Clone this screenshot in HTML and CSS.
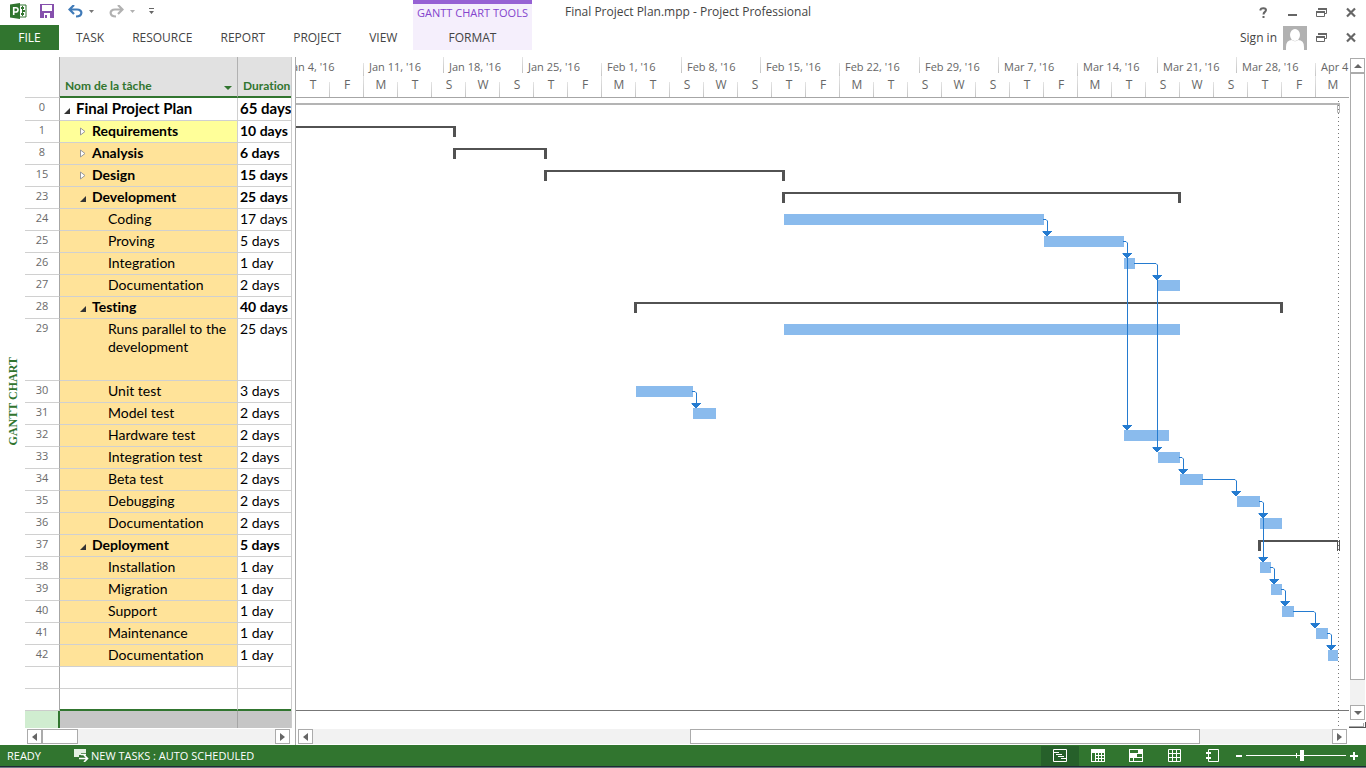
FILE: index.html
```html
<!DOCTYPE html>
<html lang="en">
<head>
<meta charset="utf-8">
<title>Final Project Plan.mpp - Project Professional</title>
<link rel="stylesheet" href="styles.css">
</head>
<body>
<header class="ribbon">
  <div class="quick">
    <svg class="app-logo" width="17" height="16" viewBox="0 0 17 16" aria-hidden="true"><path d="M9 2h7v12H9z" fill="#fff" stroke="#31752f"/><path d="M11 5h3M12 8h3M11 11h3" stroke="#31752f" stroke-width="2"/><path d="M12.500 3v10" stroke="#31752f"/><path d="M0 1.500 10 0v16L0 14.500z" fill="#31752f"/><path d="M3.700 12V4.700h2.200a1.900 1.900 0 0 1 0 4.300H3.700" fill="none" stroke="#fff" stroke-width="1.600"/></svg>
    <button class="tool" aria-label="Save"><svg width="14" height="14" viewBox="0 0 14 14"><path d="M0 0h14v14H0z" fill="#8650ad"/><path d="M2 1h10v6H2zM4 9h6v5H7v-3H5v3H4z" fill="#fff"/></svg></button>
    <button class="tool" aria-label="Undo"><svg width="15" height="13" viewBox="0 0 15 13"><path d="M6 0 1.500 4.500 6 9M2 4.500h7c6 0 6 7-1 7" fill="none" stroke="#3f7ab8" stroke-width="2.200"/></svg></button>
    <button class="drop" aria-label="Undo list"><svg width="5" height="3" viewBox="0 0 5 3"><path d="M0 0h5L2.500 3z" fill="#777"/></svg></button>
    <button class="tool redo" aria-label="Redo"><svg width="15" height="13" viewBox="0 0 15 13"><path d="M9 0l4.500 4.500L9 9M13 4.500H6c-6 0-6 7 1 7" fill="none" stroke="#b1b1b1" stroke-width="2.200"/></svg></button>
    <button class="drop" aria-label="Redo list"><svg width="5" height="3" viewBox="0 0 5 3"><path d="M0 0h5L2.500 3z" fill="#b1b1b1"/></svg></button>
    <button class="drop more" aria-label="Customize toolbar"><svg width="5" height="6" viewBox="0 0 5 6"><path d="M0 0h5v1H0zM0 3h5L2.500 6z" fill="#666"/></svg></button>
  </div>
  <nav class="tabs">
    <button class="tab file">FILE</button>
    <button class="tab">TASK</button>
    <button class="tab">RESOURCE</button>
    <button class="tab">REPORT</button>
    <button class="tab">PROJECT</button>
    <button class="tab">VIEW</button>
  </nav>
  <div class="context">
    <span class="context-name">GANTT CHART TOOLS</span>
    <button class="tab">FORMAT</button>
  </div>
  <div class="caption">
    <h1 class="title">Final Project Plan.mpp - Project Professional</h1>
    <div class="win">
      <button class="win-btn" aria-label="Help"><svg width="9" height="11" viewBox="0 0 9 11"><path d="M1.500 3.500V2.500C2 .6 7 .6 7 3c0 2-2.500 1.800-2.500 4.500M4.500 9v2" fill="none" stroke="#666" stroke-width="2"/></svg></button>
      <button class="win-btn" aria-label="Minimize"><svg width="9" height="11" viewBox="0 0 9 11"><path d="M0 7h9v2H0z" fill="#666"/></svg></button>
      <button class="win-btn" aria-label="Restore"><svg width="11" height="11" viewBox="0 0 11 11"><path d="M2.500 3V1.500h8v5H9M.5 4.500h8v5h-8zM2 1.500h9M0 4.500h9" fill="none" stroke="#666"/><path d="M2 1h9v2H2zM0 4h9v2H0z" fill="#666"/></svg></button>
      <button class="win-btn" aria-label="Close"><svg width="10" height="11" viewBox="0 0 10 11"><path d="M1 1.500l8 8M9 1.500l-8 8" stroke="#666" stroke-width="2.200"/></svg></button>
    </div>
  </div>
  <div class="account">
    <a class="signin" href="#">Sign in</a>
    <svg class="avatar" width="24" height="24" viewBox="0 0 24 24" aria-hidden="true"><path d="M0 0h24v24H0z" fill="#b1b1b1"/><ellipse cx="12" cy="9" rx="5" ry="6" fill="#fff"/><path d="M3 24v-3q0-7 6-7 3 2.500 6 0 6 0 6 7v3z" fill="#fff"/></svg>
    <button class="win-btn" aria-label="Restore document"><svg width="11" height="11" viewBox="0 0 11 11"><path d="M2.500 3V1.500h8v5H9M.5 4.500h8v5h-8z" fill="none" stroke="#666"/><path d="M2 1h9v2H2zM0 4h9v2H0z" fill="#666"/></svg></button>
    <button class="win-btn" aria-label="Close document"><svg width="10" height="11" viewBox="0 0 10 11"><path d="M1 1.500l8 8M9 1.500l-8 8" stroke="#666" stroke-width="2.200"/></svg></button>
  </div>
</header>

<main class="work">
  <aside class="rail"><span class="rail-name">GANTT CHART</span></aside>

  <section class="sheet">
    <div class="sheet-body">
      <table class="tasks">
        <colgroup><col class="c-id"><col class="c-name"><col class="c-dur"></colgroup>
        <thead><tr><th class="id" aria-label="ID"></th><th class="name"><div class="head">Nom de la tâche <svg width="8" height="4" viewBox="0 0 8 4"><path d="M0 0h8L4 4z" fill="#31752f"/></svg></div></th><th class="dur">Duration</th></tr></thead>
        <tbody>
          <tr class="root"><td class="id">0</td><td class="name l0"><button class="exp open" aria-label="Collapse"><svg width="6" height="6" viewBox="0 0 6 6"><path d="M6 0v6H0z" fill="#333"/></svg></button>Final Project Plan</td><td class="dur">65 days</td></tr>
          <tr class="sum current"><td class="id">1</td><td class="name l1"><button class="exp" aria-label="Expand"><svg width="6" height="9" viewBox="0 0 6 9"><path d="M.5 1v7L5 4.500z" fill="#fff" stroke="#999"/></svg></button>Requirements</td><td class="dur">10 days</td></tr>
          <tr class="sum"><td class="id">8</td><td class="name l1"><button class="exp" aria-label="Expand"><svg width="6" height="9" viewBox="0 0 6 9"><path d="M.5 1v7L5 4.500z" fill="#fff" stroke="#999"/></svg></button>Analysis</td><td class="dur">6 days</td></tr>
          <tr class="sum"><td class="id">15</td><td class="name l1"><button class="exp" aria-label="Expand"><svg width="6" height="9" viewBox="0 0 6 9"><path d="M.5 1v7L5 4.500z" fill="#fff" stroke="#999"/></svg></button>Design</td><td class="dur">15 days</td></tr>
          <tr class="sum"><td class="id">23</td><td class="name l1"><button class="exp open" aria-label="Collapse"><svg width="6" height="6" viewBox="0 0 6 6"><path d="M6 0v6H0z" fill="#333"/></svg></button>Development</td><td class="dur">25 days</td></tr>
          <tr><td class="id">24</td><td class="name l2">Coding</td><td class="dur">17 days</td></tr>
          <tr><td class="id">25</td><td class="name l2">Proving</td><td class="dur">5 days</td></tr>
          <tr><td class="id">26</td><td class="name l2">Integration</td><td class="dur">1 day</td></tr>
          <tr><td class="id">27</td><td class="name l2">Documentation</td><td class="dur">2 days</td></tr>
          <tr class="sum"><td class="id">28</td><td class="name l1"><button class="exp open" aria-label="Collapse"><svg width="6" height="6" viewBox="0 0 6 6"><path d="M6 0v6H0z" fill="#333"/></svg></button>Testing</td><td class="dur">40 days</td></tr>
          <tr class="tall"><td class="id">29</td><td class="name l2">Runs parallel to the development</td><td class="dur">25 days</td></tr>
          <tr><td class="id">30</td><td class="name l2">Unit test</td><td class="dur">3 days</td></tr>
          <tr><td class="id">31</td><td class="name l2">Model test</td><td class="dur">2 days</td></tr>
          <tr><td class="id">32</td><td class="name l2">Hardware test</td><td class="dur">2 days</td></tr>
          <tr><td class="id">33</td><td class="name l2">Integration test</td><td class="dur">2 days</td></tr>
          <tr><td class="id">34</td><td class="name l2">Beta test</td><td class="dur">2 days</td></tr>
          <tr><td class="id">35</td><td class="name l2">Debugging</td><td class="dur">2 days</td></tr>
          <tr><td class="id">36</td><td class="name l2">Documentation</td><td class="dur">2 days</td></tr>
          <tr class="sum"><td class="id">37</td><td class="name l1"><button class="exp open" aria-label="Collapse"><svg width="6" height="6" viewBox="0 0 6 6"><path d="M6 0v6H0z" fill="#333"/></svg></button>Deployment</td><td class="dur">5 days</td></tr>
          <tr><td class="id">38</td><td class="name l2">Installation</td><td class="dur">1 day</td></tr>
          <tr><td class="id">39</td><td class="name l2">Migration</td><td class="dur">1 day</td></tr>
          <tr><td class="id">40</td><td class="name l2">Support</td><td class="dur">1 day</td></tr>
          <tr><td class="id">41</td><td class="name l2">Maintenance</td><td class="dur">1 day</td></tr>
          <tr><td class="id">42</td><td class="name l2">Documentation</td><td class="dur">1 day</td></tr>
          <tr class="blank"><td class="id"></td><td class="name"></td><td class="dur"></td></tr>
          <tr class="blank before"><td class="id"></td><td class="name"></td><td class="dur"></td></tr>
          <tr class="picked"><td class="id"></td><td class="name"></td><td class="dur"></td></tr>
        </tbody>
      </table>
    </div>
    <div class="hbar">
      <button class="arrow" aria-label="Scroll left"><svg width="5" height="8" viewBox="0 0 5 8"><path d="M5 0v8L0 4z" fill="#666"/></svg></button>
      <div class="track"><div class="thumb sheet-thumb"></div></div>
      <button class="arrow" aria-label="Scroll right"><svg width="5" height="8" viewBox="0 0 5 8"><path d="M0 0v8l5-4z" fill="#666"/></svg></button>
    </div>
  </section>

  <section class="gantt">
    <div class="view">
      <div class="scale">
        <div class="weeks">
          <span class="week major">Jan 4, '16</span><span class="week">Jan 11, '16</span><span class="week">Jan 18, '16</span><span class="week major">Jan 25, '16</span><span class="week">Feb 1, '16</span><span class="week">Feb 8, '16</span><span class="week major">Feb 15, '16</span><span class="week">Feb 22, '16</span><span class="week">Feb 29, '16</span><span class="week major">Mar 7, '16</span><span class="week">Mar 14, '16</span><span class="week">Mar 21, '16</span><span class="week major">Mar 28, '16</span><span class="week last">Apr 4</span>
        </div>
        <div class="days">
          <span class="day">T</span><span class="day major">F</span><span class="day">M</span><span class="day">T</span><span class="day">S</span><span class="day">W</span><span class="day">S</span><span class="day">T</span><span class="day major">F</span><span class="day">M</span><span class="day">T</span><span class="day">S</span><span class="day">W</span><span class="day">S</span><span class="day">T</span><span class="day major">F</span><span class="day">M</span><span class="day">T</span><span class="day">S</span><span class="day">W</span><span class="day">S</span><span class="day">T</span><span class="day major">F</span><span class="day">M</span><span class="day">T</span><span class="day">S</span><span class="day">W</span><span class="day">S</span><span class="day">T</span><span class="day major">F</span><span class="day last">M</span>
        </div>
      </div>
      <div class="canvas">
        <svg class="chart" width="1053" height="630" viewBox="296 98 1053 630" role="img" aria-label="Gantt bars">
          <defs><path id="tip" d="M-4.500-5h9v1h-1v1h-1v1h-1v1h-1v1h-2v-1h-1v-1h-1v-1h-1v-1h-1z"/></defs>
          <path d="M296 710.500h1053" stroke="#777"/>
          <path d="M296 104h1043" stroke="#b4b4b4" stroke-width="2"/>
          <path d="M1337.500 105v7.500h2V103" fill="none" stroke="#b4b4b4"/>
          <g fill="#525252">
            <path d="M296 126h160v11h-3v-9H296z"/>
            <path d="M453 148h94v11h-3v-9h-88v9h-3z"/>
            <path d="M544 170h241v11h-3v-9H547v9h-3z"/>
            <path d="M782 192h399v11h-3v-9H785v9h-3z"/>
            <path d="M634 302h649v11h-3v-9H637v9h-3z"/>
            <path d="M1258 540h80v2h-77v9h-3zM1337 540h1v11h-1zM1339 540h1v11h-1z"/>
          </g>
          <g fill="#8abbed">
            <path d="M784 214h260v11H784z"/><path d="M1044 236h80v11h-80z"/><path d="M1124 258h11v11h-11z"/><path d="M1158 280h22v11h-22z"/>
            <path d="M784 324h396v11H784z"/><path d="M636 386h57v11h-57z"/><path d="M693 408h23v11h-23z"/><path d="M1124 430h45v11h-45z"/>
            <path d="M1158 452h22v11h-22z"/><path d="M1180 474h23v11h-23z"/><path d="M1237 496h23v11h-23z"/><path d="M1260 518h22v11h-22z"/>
            <path d="M1260 562h11v11h-11z"/><path d="M1271 584h11v11h-11z"/><path d="M1282 606h12v11h-12z"/><path d="M1316 628h12v11h-12z"/><path d="M1328 650h10v11h-10z"/>
          </g>
          <g fill="none" stroke="#247bd0">
            <path d="M1043 219.500h3l1.500 1.500v11"/><path d="M1123 241.500h3l1.500 1.500v183"/><path d="M1134 263.500h22l1.500 1.500v183"/>
            <path d="M692 391.500h3l1.500 1.500v11"/><path d="M1179 457.500h3l1.500 1.500v11"/><path d="M1202 479.500h33l1.500 1.500v11"/>
            <path d="M1259 501.500h3l1.500 1.500v55"/><path d="M1270 567.500h3l1.500 1.500v11"/><path d="M1281 589.500h3l1.500 1.500v11"/>
            <path d="M1293 611.500h21l1.500 1.500v11"/><path d="M1327 633.500h3l1.500 1.500v11"/>
          </g>
          <g fill="#247bd0">
            <use href="#tip" x="1047.500" y="236"/><use href="#tip" x="1127.500" y="258"/><use href="#tip" x="1157.500" y="280"/><use href="#tip" x="696.500" y="408"/><use href="#tip" x="1127.500" y="430"/><use href="#tip" x="1157.500" y="452"/><use href="#tip" x="1183.500" y="474"/><use href="#tip" x="1236.500" y="496"/><use href="#tip" x="1263.500" y="518"/><use href="#tip" x="1263.500" y="562"/><use href="#tip" x="1274.500" y="584"/><use href="#tip" x="1285.500" y="606"/><use href="#tip" x="1315.500" y="628"/><use href="#tip" x="1331.500" y="650"/>
          </g>
          <path d="M1338.500 101v627" stroke="#777" stroke-dasharray="1 3"/>
        </svg>
      </div>
      <div class="hbar">
        <button class="arrow" aria-label="Scroll left"><svg width="5" height="8" viewBox="0 0 5 8"><path d="M5 0v8L0 4z" fill="#666"/></svg></button>
        <div class="track"><div class="thumb gantt-thumb"></div></div>
        <button class="arrow" aria-label="Scroll right"><svg width="5" height="8" viewBox="0 0 5 8"><path d="M0 0v8l5-4z" fill="#666"/></svg></button>
      </div>
    </div>
    <div class="vside">
      <button class="arrow" aria-label="Scroll up"><svg width="8" height="4" viewBox="0 0 8 4"><path d="M0 4h8L4 0z" fill="#666"/></svg></button>
      <div class="vtrack"><div class="vthumb"></div></div>
      <button class="arrow" aria-label="Scroll down"><svg width="8" height="4" viewBox="0 0 8 4"><path d="M0 0h8L4 4z" fill="#666"/></svg></button>
      <svg class="split" width="17" height="6" viewBox="0 0 17 6" aria-hidden="true"><path d="M0 4h14V1h1v4H0z" fill="#aaa"/><path d="M0 5h16V0h1v6H0z" fill="#555"/></svg>
    </div>
  </section>
</main>

<footer class="status">
  <span class="ready">READY</span>
  <button class="mode"><svg width="15" height="13" viewBox="0 0 15 13"><path d="M0 0h12v4H7v2H5v2H0z" fill="#e4f1e3"/><path d="M5 9.500h8M10 6l3.500 3.500L10 13M7 5.500h5" fill="none" stroke="#fff" stroke-width="1.600"/></svg>NEW TASKS : AUTO SCHEDULED</button>
  <div class="views">
    <button class="view-btn on" aria-label="Gantt chart"><svg width="14" height="13" viewBox="0 0 14 13"><path d="M.5.5h13v12H.5zM1 3.500h5M3 5.500h6M5 7.500h6M8 9.500h5" fill="none" stroke="#fff"/></svg></button>
    <button class="view-btn" aria-label="Task usage"><svg width="14" height="13" viewBox="0 0 14 13"><path d="M0 0h14v13H0z" fill="#fff"/><path d="M1 4h3v8H1zM5 4h2v2H5zM8 4h2v2H8zM11 4h2v2h-2zM5 7h2v2H5zM8 7h2v2H8zM11 7h2v2h-2zM5 10h2v2H5zM8 10h2v2H8zM11 10h2v2h-2z" fill="#31752f"/></svg></button>
    <button class="view-btn" aria-label="Team planner"><svg width="14" height="13" viewBox="0 0 14 13"><path d="M0 0h14v13H0z" fill="#fff"/><path d="M1 1h8v3H1zM8 5h5v3H8zM1 9h3v3H1zM5 9h8v3H5z" fill="#31752f"/></svg></button>
    <button class="view-btn" aria-label="Resource sheet"><svg width="13" height="13" viewBox="0 0 13 13"><path d="M.5.5h12v12H.5zM4.500 0v13M8.500 0v13M0 4.500h13M0 8.500h13" fill="none" stroke="#fff"/></svg></button>
    <button class="view-btn" aria-label="Report"><svg width="13" height="13" viewBox="0 0 13 13"><path d="M2.500 3V.5h10v12h-10V10M2.500 5v3" fill="none" stroke="#fff"/><path d="M0 3h5v2H0zM0 8h5v2H0z" fill="#fff"/></svg></button>
  </div>
  <div class="zoom">
    <button class="zoom-btn" aria-label="Zoom out"><svg width="6" height="2" viewBox="0 0 6 2"><path d="M0 0h6v2H0z" fill="#fff"/></svg></button>
    <input class="slider" type="range" min="0" max="100" value="56" aria-label="Zoom">
    <button class="zoom-btn" aria-label="Zoom in"><svg width="8" height="8" viewBox="0 0 8 8"><path d="M3 0h2v3h3v2H5v3H3V5H0V3h3z" fill="#fff"/></svg></button>
  </div>
</footer>
</body>
</html>
```
FILE: styles.css
```css
* { box-sizing: border-box; }
html, body { height: 100%; margin: 0; }
body {
  display: flex;
  flex-direction: column;
  overflow: hidden;
  background: #fff;
  color: #444;
  font: 12px/16px "Open Sans", "Noto Sans", sans-serif;
  border-bottom: 1px solid #6c7780;
}
button {
  margin: 0;
  padding: 0;
  border: 0;
  background: none;
  color: inherit;
  font: inherit;
  display: inline-flex;
  align-items: center;
  justify-content: center;
}
svg { display: block; flex: none; }

/* Ribbon */
.ribbon {
  display: grid;
  grid-template-columns: 413px 119px 1fr;
  grid-template-rows: 25px 25px;
  padding-bottom: 7px;
  flex: none;
  box-sizing: content-box;
}
.quick { display: flex; align-items: center; padding: 0 0 3px 10px; }
.quick .tool { margin-left: 14px; }
.quick .app-logo { margin-right: -1px; }
.quick .drop { margin-left: 6px; }
.quick .redo { margin-left: 15px; }
.quick .more { margin-left: 14px; }
.tabs { grid-row: 2; grid-column: 1; display: flex; }
.tab { padding: 0 14px; height: 25px; }
.file { width: 59px; margin-right: 3px; background: #31752f; color: #fff; }
.context {
  grid-row: 1 / 3;
  grid-column: 2;
  display: flex;
  flex-direction: column;
  align-items: center;
  justify-content: space-between;
  background: #f5effc;
  border-top: 4px solid #9661d4;
}
.context-name { color: #8445cd; font-size: 11px; line-height: 18px; white-space: nowrap; }
.caption { grid-row: 1; grid-column: 3; display: flex; justify-content: space-between; align-items: center; padding: 0 1px 1px 33px; }
.title { margin: 0; font-size: 12px; font-weight: 400; }
.win, .account { display: flex; align-items: center; }
.account { grid-row: 2; grid-column: 3; justify-content: flex-end; padding-right: 1px; }
.win-btn { width: 29px; height: 24px; }
.signin { color: inherit; text-decoration: none; margin-right: 6px; }

/* Work area */
.work { flex: 1; min-height: 0; display: flex; }
.rail { width: 25px; display: flex; align-items: center; justify-content: center; }
.rail-name {
  writing-mode: vertical-rl;
  transform: rotate(180deg);
  white-space: nowrap;
  color: #31752f;
  font: bold 12px/16px "Liberation Serif", serif;
}
.sheet {
  width: 271px;
  flex: none;
  display: flex;
  flex-direction: column;
  padding-right: 3px;
  border-right: 1px solid #aaa;
}
.sheet-body { flex: 1; min-height: 0; overflow: hidden; border-right: 1px solid #ccc; }
.tasks {
  width: 100%;
  table-layout: fixed;
  border-collapse: separate;
  border-spacing: 0;
  color: #000;
  font: 14px/18px Lato, sans-serif;
  font-variant-ligatures: no-common-ligatures;
}
.c-id { width: 35px; }
.c-name { width: 178px; }
.tasks td, .tasks th { padding: 0; height: 22px; border-bottom: 1px solid #d0d0d0; border-right: 1px solid #d0d0d0; vertical-align: top; overflow: hidden; text-align: left; }
.tasks .dur { border-right: 0; padding: 1px 0 0 2px; white-space: nowrap; }
.tasks .id { border-right-color: #a6a6a6; text-align: center; color: #6a6a6a; font: 11px/18px "Open Sans", sans-serif; }
.tasks th.name, .tasks th.dur { height: 41px; padding: 0 5px 2px; vertical-align: bottom; background: #e1e1e1; border-bottom: 2px solid #31752f; color: #31752f; font-size: 12px; line-height: 16px; font-weight: 700; }
.tasks th.name { border-right-color: #b1b1b1; }
.head { display: flex; justify-content: space-between; align-items: center; }
.head svg { margin-top: 4px; }
.tasks td.name { background: #ffe399; }
.tasks td.l0 { background: #fff; padding: 1px 0 0 4px; }
.tasks td.l1 { padding: 1px 0 0 20px; }
.tasks td.l2 { padding: 1px 4px 0 48px; }
.exp { width: 6px; height: 9px; margin-right: 6px; }
.open { padding-bottom: 2px; }
.root td { height: 23px; }
.tasks .root .name, .tasks .root .dur { font-size: 15px; font-weight: 700; }
.sum .name, .sum .dur { font-weight: 700; }
.tasks .current .name { background: #ffff99; }
.tall td { height: 62px; }
.tasks .blank .name { background: #fff; }
.tasks .before td { border-bottom-color: #31752f; border-bottom-width: 2px; }
.tasks .before .id { border-bottom: 1px solid #ccc; }
.tasks .picked td { height: 17px; border-bottom: 0; }
.tasks .picked .name, .tasks .picked .dur { background: #c6c6c6; }
.tasks .picked .name { border-right-color: #a6a6a6; }
.tasks .picked .id { background: #d0edd0; border-right: 2px solid #31752f; }

/* Scroll bars */
.hbar { display: flex; flex: none; height: 17px; padding: 1px 2px; }
.arrow { width: 15px; height: 15px; flex: none; border: 1px solid #ababab; background: #fff; }
.track { flex: 1; background: #f2f2f2; }
.thumb { height: 15px; border: 1px solid #ababab; background: #fff; }
.sheet-thumb { width: 15%; min-width: 36px; }
.gantt-thumb { width: 50%; margin-left: 37%; }

/* Chart */
.gantt { flex: 1; min-width: 0; display: flex; }
.view { flex: 1; min-width: 0; display: flex; flex-direction: column; }
.scale { height: 41px; flex: none; overflow: hidden; border-bottom: 1px solid #a6a6a6; color: #666; white-space: nowrap; }
.weeks { display: grid; grid-template-columns: 80px repeat(4, 80px 79px 79px) 34px; margin-left: -12px; height: 19px; }
.week, .day { background: linear-gradient(#e4e4e4, #c4c4c4) 100% 0 / 1px 16px no-repeat; }
.week { padding-left: 5px; font-size: 11px; line-height: 20px; }
.week.major { background-size: 1px 14px; background-position: 100% 100%; }
.days { display: flex; }
.day { width: 34px; flex: none; height: 21px; text-align: center; line-height: 18px; background-size: 1px 15px; background-position: 100% 100%; }
.day.major { background-size: 1px 21px; }
.weeks .last, .days .last { background: none; }
.canvas { flex: 1; min-height: 0; overflow: hidden; }
.vside { width: 17px; flex: none; display: flex; flex-direction: column; align-items: center; padding: 1px 0 17px; }
.vtrack { flex: 1; width: 15px; background: #f2f2f2; }
.vthumb { height: 96%; border: 1px solid #ababab; background: #fff; }
.split { margin-top: 2px; }

/* Status bar */
.status { flex: none; height: 22px; display: flex; align-items: center; background: #31752f; border-bottom: 1px solid #1d2a33; color: #fff; font-size: 11px; padding: 0 5px 0 7px; }
.mode { gap: 2px; margin-left: 33px; }
.views { display: flex; margin-left: auto; }
.view-btn { width: 38px; height: 20px; }
.on { background: #26602a; }
.zoom { display: flex; align-items: center; }
.zoom-btn { width: 15px; height: 20px; }
.slider {
  -webkit-appearance: none;
  appearance: none;
  width: 100px;
  height: 20px;
  margin: 0;
  background:
    linear-gradient(#fff, #fff) 50% 50% / 1px 5px no-repeat,
    linear-gradient(#fff, #fff) 0 50% / 100% 1px no-repeat;
}
.slider::-webkit-slider-thumb { -webkit-appearance: none; width: 4px; height: 11px; background: #fff; }
```
